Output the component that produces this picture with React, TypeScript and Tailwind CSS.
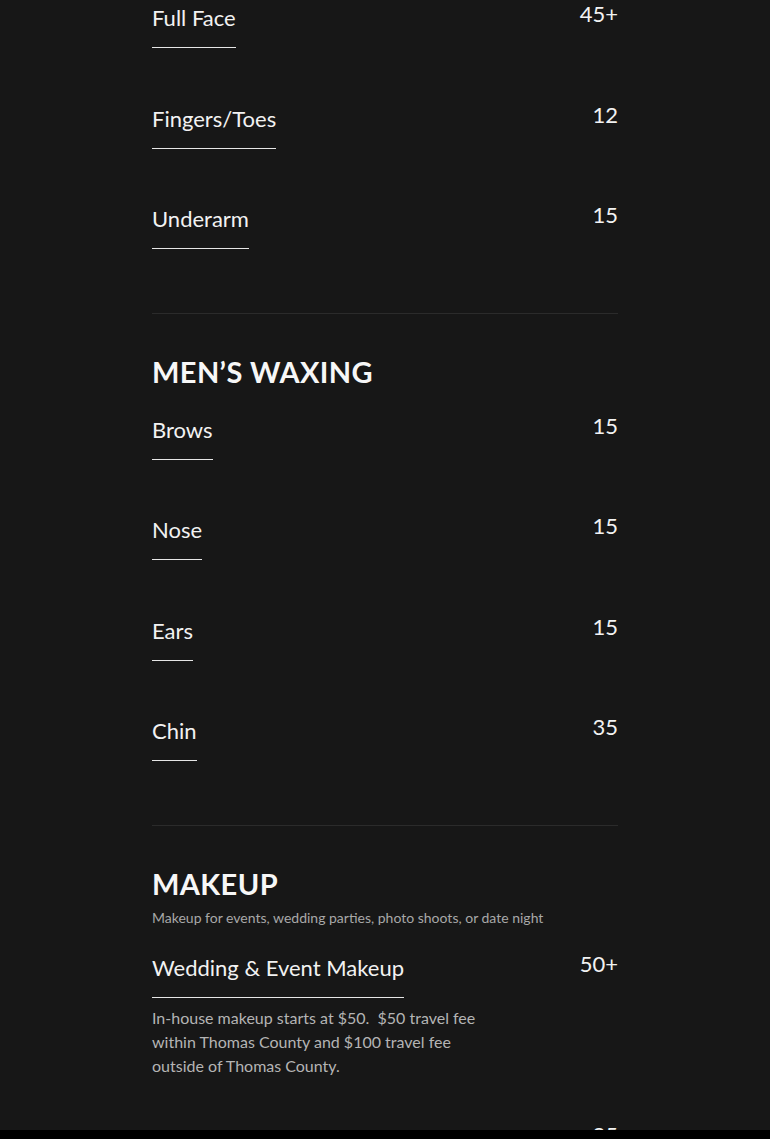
type Item = {
    name: string
    price: string
    note?: string
}

type Section = {
    title?: string
    subtitle?: string
    items: Item[]
}

const sections: Section[] = [
    {
        items: [
            { name: "Full Face", price: "45+" },
            { name: "Fingers/Toes", price: "12" },
            { name: "Underarm", price: "15" },
        ],
    },
    {
        title: "MEN’S WAXING",
        items: [
            { name: "Brows", price: "15" },
            { name: "Nose", price: "15" },
            { name: "Ears", price: "15" },
            { name: "Chin", price: "35" },
        ],
    },
    {
        title: "MAKEUP",
        subtitle: "Makeup for events, wedding parties, photo shoots, or date night",
        items: [
            {
                name: "Wedding & Event Makeup",
                price: "50+",
                note: "In-house makeup starts at $50.  $50 travel fee within Thomas County and $100 travel fee outside of Thomas County.",
            },
            { name: "Trial Run", price: "25" },
        ],
    },
]

function MenuItem({ item }: { item: Item }) {
    return (
        <div className="flex items-start justify-between">
            <div className="flex flex-col items-start">
                <p className="border-b border-[#e6e6e6] pb-[14px] text-[22px] leading-[30px] text-[#f2f2f2]">
                    {item.name}
                </p>
                {item.note && (
                    <p className="mt-[8px] max-w-[340px] whitespace-pre-wrap text-[16px] leading-[24px] text-[#b4b4b4]">
                        {item.note}
                    </p>
                )}
            </div>
            <p className="-mt-[4px] text-[22px] leading-[30px] text-[#f2f2f2]">{item.price}</p>
        </div>
    )
}

export default function App() {
    return (
        <div className="flex h-[1139px] flex-col bg-black" style={{ fontFamily: "Lato, 'Open Sans', sans-serif" }}>
            <div className="flex-1 overflow-hidden bg-[#171717]">
                <div className="mx-auto w-[466px] pt-[3px]">
                    {sections.map((section, i) => (
                        <div key={i} className={i > 0 ? "border-t border-[#2b2b2b] pt-[39px]" : ""}>
                            {section.title && (
                                <h2 className="text-[29px] font-bold leading-[38px] tracking-[0.4px] text-[#f7f7f7]">
                                    {section.title}
                                </h2>
                            )}
                            {section.subtitle && (
                                <p className="mt-[5px] text-[14px] leading-[20px] text-[#a8a8a8]">{section.subtitle}</p>
                            )}
                            <div className={section.subtitle ? "mt-[25px] flex flex-col" : section.title ? "mt-[24px] flex flex-col" : "flex flex-col"}>
                                {section.items.map((item, j) => (
                                    <div key={j} className={item.note ? "pb-[46px]" : "pb-[55.5px]"}>
                                        <MenuItem item={item} />
                                    </div>
                                ))}
                            </div>
                            <div className="h-[8px]" />
                        </div>
                    ))}
                </div>
            </div>
            <div className="h-[9px] bg-black" />
        </div>
    )
}
